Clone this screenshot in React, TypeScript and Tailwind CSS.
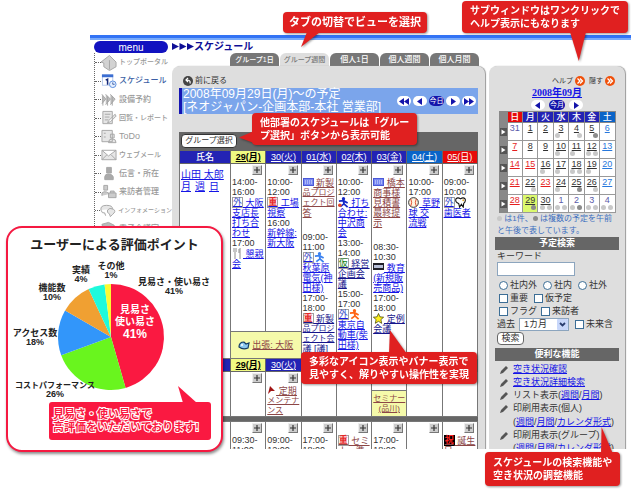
import type { ReactNode } from "react";
import { clsx } from "clsx";

type Tone = "new" | "read" | "navy";
type Entry = {
  time?: string[];
  icons?: string[];
  lines: string[];
  tone?: Tone;
  gap?: string;
};

const tones: Record<Tone, string> = {
  new: "text-[#1414e6]",
  read: "text-[#8c4646]",
  navy: "text-[#14148c]",
};

const week1: Entry[][] = [
  [
    { time: ["14:00-", "16:00"], icons: ["外"], lines: ["大阪", "支店長", "打ち合", "わせ"] },
    { time: ["17:00"], icons: ["fork"], lines: ["懇親", "会"] },
  ],
  [
    { time: ["10:00-", "12:00"], icons: ["重"], lines: ["工場", "視察"] },
    { time: ["16:00"], lines: ["新幹線:", "新大阪"] },
  ],
  [
    { icons: ["board"], lines: ["新製", "品プロジ", "ェクト回", "答"], tone: "read" },
    { time: ["09:00-", "11:00"], icons: ["外", "runblue"], lines: ["", "秋葉原", "電気(神", "田様)"], gap: "mt-3.5" },
    { time: ["17:00-", "18:00"], icons: ["重"], lines: ["新製", "品プロジ", "ェクト会", "議 [議]"], tone: "navy" },
  ],
  [
    { time: ["10:00-", "12:00"], icons: ["run"], lines: ["打ち", "合わせ:", "中沢商", "会"] },
    { time: ["13:00-", "14:00"], icons: ["仮"], lines: ["経営", "企画会", "議"], tone: "navy" },
    { time: ["15:00-", "17:00"], icons: ["外", "runorange"], lines: ["", "東京自", "動車(柴", "田様)"] },
  ],
  [
    { icons: ["board"], lines: ["橋本", "商事様", "見積書", "最終提", "示"], tone: "read" },
    { time: ["08:30-", "10:30"], icons: ["screen"], lines: ["教育", "(新規販", "売商品)"], gap: "mt-3.5" },
    { time: ["17:00-", "18:00"], icons: ["star"], lines: ["定例", "会議"], tone: "navy" },
  ],
  [{ time: ["10:00-", "17:00"], icons: ["ball"], lines: ["草野", "球 交", "流戦"] }],
  [{ time: ["09:00-", "10:00"], icons: ["外", "tooth"], lines: ["", "歯医者"] }],
];

const week3: Entry[][] = [
  [{ time: ["09:30-", "11:00"], lines: [] }],
  [{ time: ["09:00-", "12:00"], lines: [] }],
  [{ time: ["17:00-", "18:00"], lines: [] }],
  [{ icons: ["重"], lines: ["セミ", "ナー準"], tone: "read" }],
  [{ time: ["17:00-", "18:00"], lines: [] }],
  [],
  [{ icons: ["祝"], lines: ["誕生", "日"], tone: "read" }],
];

const days = ["29(月)", "30(火)", "01(水)", "02(木)", "03(金)", "04(土)", "05(日)"];

function Stamp({ name }: { name: string }) {
  if (name === "祝")
    return <span className="flex size-[11px] items-center justify-center bg-black text-[9px] leading-none font-bold text-[#ff2020]">祝</span>;
  if (name === "外" || name === "重" || name === "仮")
    return (
      <span
        className={clsx(
          "flex size-[11px] items-center justify-center border border-[#a0a0a0] bg-white text-[9px] leading-none",
          name === "外" && "text-[#3c50c8]",
          name === "重" && "font-bold text-[#e62828]",
          name === "仮" && "text-[#148214]"
        )}
      >
        {name}
      </span>
    );
  if (name === "board")
    return (
      <svg className="size-[11px]" viewBox="0 0 11 11">
        <rect x="0.5" y="1.5" width="10" height="7" fill="#7888f0" stroke="#4a58d8" />
        <path d="M2 4h7M2 6h7" stroke="#dfe4ff" strokeDasharray="1 1" />
      </svg>
    );
  if (name === "screen")
    return (
      <svg className="size-[11px]" viewBox="0 0 11 11">
        <rect y="1" width="11" height="7" fill="#202028" />
        <rect x="1" y="3" width="9" height="3" fill="#b8c0d8" />
      </svg>
    );
  if (name === "star")
    return (
      <svg className="size-[11px] overflow-visible" viewBox="0 0 12 12">
        <path d="M6 0.5 7.6 4.2 11.6 4.6 8.6 7.2 9.5 11.3 6 9.1 2.5 11.3 3.4 7.2 0.4 4.6 4.4 4.2Z" fill="#fff01e" stroke="#404000" strokeWidth="0.8" />
      </svg>
    );
  if (name === "ball")
    return (
      <svg className="size-[11px]" viewBox="0 0 12 12">
        <circle cx="6" cy="6" r="5.3" fill="#fff4e0" stroke="#222" />
        <path d="M3 2Q5 6 3 10M9 2Q7 6 9 10" fill="none" stroke="#e04020" />
      </svg>
    );
  if (name === "tooth")
    return (
      <svg className="size-[11px]" viewBox="0 0 12 12">
        <path d="M1 2Q3 0 6 2 9 0 11 2 12 5 9.5 7L9 11 7 8 5 11 4 7Q0 6 1 2Z" fill="#fff" stroke="#111" strokeWidth="1.2" />
        <circle cx="9" cy="3.5" r="1" fill="#e0a830" />
      </svg>
    );
  if (name === "fork")
    return (
      <svg className="size-[11px]" viewBox="0 0 11 11">
        <path d="M2 0v4M4 0v4M3 4v7M8 0v11M7 1v4" stroke="#8c8c8c" strokeWidth="1" fill="none" />
      </svg>
    );
  const body = name === "run" ? "#1428c8" : name === "runblue" ? "#3c82f0" : "#ff6414";
  return (
    <svg className="size-[11px]" viewBox="0 0 12 12">
      <circle cx="6" cy="1.8" r="1.8" fill={body} />
      <path d="M1 4.5 6 4 10.5 6.5M6 4 6.5 7.5 10.5 11M6.5 7.5 2.5 10.5" fill="none" stroke={body} strokeWidth="2" />
      {name === "run" && <circle cx="2" cy="9" r="2" fill="#e04628" />}
    </svg>
  );
}

function AddButton() {
  return (
    <button aria-label="予定を追加" className="mr-[3px] mb-0.5 ml-auto flex size-[10px] items-center justify-center border border-t-[#eee] border-r-[#777] border-b-[#777] border-l-[#eee] bg-[#ccc]">
      <svg className="size-[6px]" viewBox="0 0 6 6">
        <path d="M0 3h6M3 0v6" stroke="#333" strokeWidth="1.2" />
      </svg>
    </button>
  );
}

// four full-width characters only fit the column one size down
const isWide = (line: string) => line.length === 4 && !/[ -~]/.test(line);

function DayCell({ entries }: { entries: Entry[] }) {
  return (
    <>
      <AddButton />
      {entries.map((e, i) => (
        <div key={i} className={clsx("pl-px text-[9px] leading-[10px] whitespace-nowrap", e.gap)}>
          {e.time?.map((t) => (
            <div key={t} className="text-[#333]">{t}</div>
          ))}
          {e.lines.length > 0 && (
            <a href="#" className={clsx("block underline", tones[e.tone ?? "new"])}>
              {e.lines.map((line, n) =>
                n === 0 && e.icons ? (
                  <span key={n} className="flex h-[11px] items-center">
                    {e.icons.map((icon) => (
                      <Stamp key={icon} name={icon} />
                    ))}
                    <span className="whitespace-pre underline">{line && " " + line}</span>
                  </span>
                ) : (
                  <span key={n} className={clsx("block", isWide(line) && "text-[8px]")}>{line}</span>
                )
              )}
            </a>
          )}
        </div>
      ))}
    </>
  );
}

function HeadRow({ label, from }: { label: string; from: string }) {
  return (
    <tr className="h-[13px] bg-[#2323b4] text-[9px] leading-[11px] text-white">
      <th className="border border-[#666] p-0 font-medium">{label}</th>
      {days.map((d, i) => (
        <th
          key={from + d}
          className={clsx(
            "border border-[#666] p-0",
            i === 0 ? "bg-[#f0fa82] font-bold text-black" : "font-normal",
            i === 5 && "bg-[#0a64c8]",
            i === 6 && "bg-[#e60a0a]"
          )}
        >
          <a href="#" className="underline">{d}</a>
        </th>
      ))}
    </tr>
  );
}

const cell = "border border-[#777] bg-white p-0 pt-px align-top";

function WeekTable() {
  return (
    <table className="w-full table-fixed border-collapse">
      <colgroup>
        <col className="w-[51px]" />
        {days.map((d) => (
          <col key={d} />
        ))}
      </colgroup>
      <tbody>
        <HeadRow label="氏名" from="a" />
        <tr className="h-[168px]">
          <td rowSpan={2} className={clsx(cell, "text-[10px] leading-[12px] text-[#1414e6]")}>
            <div className="pt-1 pl-px">
              <a href="#" className="whitespace-pre underline">山田 太郎</a>
              <div className="flex gap-1">
                <a href="#" className="underline">月</a>
                <a href="#" className="underline">週</a>
                <a href="#" className="underline">日</a>
              </div>
            </div>
          </td>
          {week1.map((entries, i) => (
            <td key={i} rowSpan={i < 2 ? 1 : 2} className={cell}>
              {/* the busiest columns run on below the row */}
              <div className="h-[166px]">
                <DayCell entries={entries} />
              </div>
            </td>
          ))}
        </tr>
        <tr className="h-[27px]">
          <td colSpan={2} className="border border-[#777] bg-[#f5faaa] p-0">
            <a href="#" className="flex items-center justify-center gap-0.5 text-[9px] leading-[12px] text-[#8c4646] underline">
              <svg className="h-[9px] w-[12px]" viewBox="0 0 12 9">
                <path d="M1 6Q1 1 6 1L8 3 11 2 10 7Q5 9 1 6Z" fill="#8cc8f0" stroke="#143c64" strokeWidth="1.2" />
                <circle cx="4" cy="4" r="1" fill="#fff" />
              </svg>
              出張: 大阪
            </a>
          </td>
        </tr>
        <HeadRow label="グループ" from="b" />
        <tr className="h-[19px]">
          <td rowSpan={2} className={cell} />
          {days.map((d, i) => (
            <td key={d} rowSpan={i === 4 ? 1 : 2} className={cell}>
              <AddButton />
              {i === 1 && (
                <a href="#" className="block pl-px text-[8px] leading-[10px] whitespace-nowrap text-[#8c4646] underline">
                  <span className="flex h-[11px] items-center text-[9px]">
                    <svg className="size-[9px]" viewBox="0 0 9 9">
                      <path d="M1 8 3 0 8 5 4 5Z" fill="#a01414" />
                    </svg>
                    <span className="whitespace-pre underline"> 定期</span>
                  </span>
                  メンテナ
                  <br />
                  ンス
                </a>
              )}
            </td>
          ))}
        </tr>
        <tr className="h-[25px]">
          <td className="border border-[#777] bg-[#f5faaa] p-0 text-center text-[8px] leading-[10px]">
            <a href="#" className="text-[#8c4646] underline">
              セミナー
              <br />
              (品川)
            </a>
          </td>
        </tr>
        <tr className="h-[5px]">
          <td colSpan={8} className="bg-[#666] p-0" />
        </tr>
        <tr className="h-[40px]">
          <td className={cell} />
          {week3.map((entries, i) => (
            <td key={i} className={cell}>
              <DayCell entries={entries} />
            </td>
          ))}
        </tr>
      </tbody>
    </table>
  );
}

const menuItems = [
  { label: "トップポータル", size: "text-[7px]", icon: <path d="M0 7 9 0 16 7 16 12 9 16 3 12 3 8Z M9 5v10" fill="#d2d2d2" /> },
  { label: "スケジュール", size: "text-[8px]", icon: null },
  { label: "設備予約", size: "text-[8px]", icon: <path d="M1 2 5 7 1 12M5 2 10 7 5 13M10 2 15 7 10 13M2 4v10M7 4v10M12 4v10" fill="#bebebe" /> },
  { label: "回覧・レポート", size: "text-[7px]", icon: <path d="M2 1H12V14H2ZM4 4h6M4 7h5M4 10h4M15 4 8 11 7 13 10 12 16 6Z" /> },
  { label: "ToDo", size: "text-[9px]", icon: <path d="M1 1H12V13H1ZM3 4h2M3 8h2M10 5h4v4h-4ZM8 14Q8 10 12 10T16 14Z" /> },
  { label: "ウェブメール", size: "text-[7px]", icon: <path d="M1 3H16V13H1ZM1 3 8 9 16 3M1 13 6 8M16 13 11 8" /> },
  { label: "伝言・所在", size: "text-[8px]", icon: <path d="M6 1H11V7H6ZM4 14V11Q4 8 8 8T13 11V14Z" fill="#aaa" /> },
  { label: "来訪者管理", size: "text-[8px]", icon: <path d="M3 1H7V6H3ZM1 12V9Q3 7 6 8L9 10M8 9H16V14H8ZM10 9V7h4v2" fill="#ccc" /> },
  { label: "インフォメーション", size: "text-[6px]", icon: <path d="M1 7Q0 2 7 2T13 6M1 7Q2 11 5 10L6 13M8 7Q10 4 14 6T13 12L11 14 10 11Q7 10 8 7Z" /> },
  { label: "電子会議室", size: "text-[8px]", icon: <path d="M1 3 8 1 14 4V10H3Z" fill="#bbb" /> },
];

function SideMenu() {
  return (
    <nav className="w-[82px] shrink-0 pt-px">
      <div className="ml-1 flex h-[12px] w-[74px] items-center justify-center rounded-full bg-[#1212c0] font-['Liberation_Sans',sans-serif] text-[10px] text-white">menu</div>
      <ul className="ml-1 border-l border-dotted border-[#666]">
        {menuItems.map((item, i) => (
          <li key={item.label} className={clsx("flex items-center", i % 2 === 0 ? "h-[19px]" : "h-[18px]")}>
            <span className="w-[6px] border-t border-dotted border-[#666]" />
            <a href="#" className={clsx("flex items-center gap-0.5 font-medium whitespace-nowrap", i === 1 ? "text-[#3c5fa5]" : "text-[#999]", item.size)}>
              <svg className="size-4" viewBox="0 0 17 16" fill="#e6e6e6" stroke="#a5a5a5">
                {item.icon ?? (
                  <>
                    <rect x="1.5" y="1.5" width="11" height="11" fill="#fff" stroke="#b4c8eb" />
                    <rect x="1" y="1" width="12" height="3" fill="#3c6ed2" stroke="none" />
                    <path d="M5 7 7 6V12" fill="none" stroke="#142878" strokeWidth="1.6" />
                    <circle cx="12.5" cy="11.5" r="3.5" fill="#e6f0ff" stroke="#5a8cdc" />
                    <path d="M12.5 9.5v2h2" fill="none" stroke="#3c5fa5" />
                  </>
                )}
              </svg>
              {item.label}
            </a>
          </li>
        ))}
      </ul>
    </nav>
  );
}

function Arrow({ d, label }: { d: string; label: string }) {
  return (
    <button aria-label={label} className="flex h-[10px] w-[14px] items-center justify-center rounded-full bg-white">
      <svg className="h-[7px] w-[12px]" viewBox="0 0 12 7" fill="#1414aa">
        <path d={d} />
      </svg>
    </button>
  );
}

const LEFT = "M8 0V7L3 3.5Z";
const RIGHT = "M4 0V7L9 3.5Z";

const tabs = [
  { label: "グループ1日", size: "text-[7px]" },
  { label: "グループ週間", size: "text-[7px]" },
  { label: "個人1日", size: "text-[8px]" },
  { label: "個人週間", size: "text-[8px]" },
  { label: "個人月間", size: "text-[8px]" },
];

// [day, colour, left dot, right dot]; 1 = light, 2 = dark
type CalDay = [number, string, number, number];
const K = "text-[#333]";
const R = "text-[#e61e1e]";
const B = "text-[#2878dc]";
const P = "text-[#5a5aaa]";
const calendar: CalDay[][] = [
  [[31, P, 0, 0], [1, K, 0, 0], [2, K, 0, 0], [3, K, 1, 0], [4, K, 0, 1], [5, K, 0, 2], [6, B, 0, 0]],
  [[7, R, 0, 0], [8, K, 0, 0], [9, K, 0, 0], [10, K, 1, 0], [11, K, 1, 0], [12, K, 1, 1], [13, B, 0, 0]],
  [[14, R, 0, 0], [15, R, 0, 0], [16, K, 1, 0], [17, K, 1, 0], [18, K, 1, 1], [19, K, 1, 0], [20, B, 0, 0]],
  [[21, R, 0, 0], [22, K, 0, 1], [23, R, 0, 0], [24, K, 1, 0], [25, K, 0, 2], [26, K, 0, 1], [27, B, 0, 0]],
  [[28, R, 0, 0], [29, K, 0, 2], [30, K, 1, 1], [1, P, 1, 1], [2, P, 1, 2], [3, P, 1, 1], [4, P, 1, 1]],
];

function Dot({ kind }: { kind: number }) {
  return <span className={clsx("inline-block size-[5px] rounded-full", kind === 1 && "bg-[#c8c8c8]", kind === 2 && "bg-[#8c8c8c]")} />;
}

function MiniCalendar() {
  return (
    <table className="mx-auto w-[117px] table-fixed border-collapse text-[9px] leading-[10px]">
      <colgroup>
        <col className="w-[8px]" />
      </colgroup>
      <thead>
        <tr className="h-[11px] bg-[#2323b4] text-white">
          <th className="border border-[#888] bg-[#888] p-0" />
          {["日", "月", "火", "水", "木", "金", "土"].map((d, i) => (
            <th key={d} className={clsx("border border-[#888] p-0 font-medium", i === 0 && "bg-[#e60a0a]", i === 6 && "bg-[#0a64c8]")}>
              {d}
            </th>
          ))}
        </tr>
      </thead>
      <tbody>
        {calendar.map((row, r) => (
          <tr key={r} className="h-[18px] bg-white">
            <td className="border border-[#888] bg-[#888] p-0">
              <svg className="h-[8px] w-[7px]" viewBox="0 0 7 8">
                <rect width="7" height="8" fill="#555" />
                <path d="M1.5 1.5 5.5 4 1.5 6.5Z" fill="#fff" />
              </svg>
            </td>
            {row.map(([day, color, a, b], i) => {
              const outside = (r === 0 && i === 0) || (r === 4 && i > 2);
              return (
                <td key={i} className={clsx("border border-[#999] p-0 text-center align-top", r === 4 && i === 1 && "bg-[#dcfa6e]")}>
                  <a href="#" className={clsx("block", color, !outside && "underline")}>{day}</a>
                  <span className="flex justify-center gap-0.5">
                    <Dot kind={a} />
                    <Dot kind={b} />
                  </span>
                </td>
              );
            })}
          </tr>
        ))}
      </tbody>
    </table>
  );
}

function Bar({ children }: { children: ReactNode }) {
  return <h3 className="flex h-[13px] items-center justify-center bg-[#666] text-[9px] leading-none font-bold text-white">{children}</h3>;
}

function Check({ type = "checkbox", label }: { type?: "checkbox" | "radio"; label: string }) {
  return (
    <label className="flex items-center gap-0.5">
      <input
        type={type}
        name={type === "radio" ? "scope" : undefined}
        className={clsx("size-[9px] appearance-none border border-[#3c6e96] bg-white", type === "radio" && "rounded-full")}
      />
      {label}
    </label>
  );
}

function Tool({ children }: { children: ReactNode }) {
  return (
    <li className="flex h-[13px] items-center gap-1">
      <svg className="size-[10px]" viewBox="0 0 10 10">
        <path d="M1 9 2 6 7 1 9 3 4 8Z" fill="#555" />
      </svg>
      <span>{children}</span>
    </li>
  );
}

function Link({ children }: { children: ReactNode }) {
  return <a href="#" className="text-[#1414e6] underline">{children}</a>;
}

function HelpIcon() {
  return (
    <svg className="size-[10px]" viewBox="0 0 10 10">
      <circle cx="5" cy="5" r="5" fill="#f0500a" />
      <path d="M2.5 2.5 5 5 2.5 7.5M5 2.5 7.5 5 5 7.5" fill="none" stroke="#fff" strokeWidth="1.3" />
    </svg>
  );
}

function SubWindow() {
  return (
    <aside className="w-[136px] shrink-0 rounded-t-lg bg-[#dedede] px-1.5 pt-2 text-[9px] leading-[13px] whitespace-nowrap text-[#333] shadow-[1px_0_1px_#999]">
      <div className="flex h-[13px] items-center justify-end gap-1 pr-1 text-[7px]">
        <a href="#" className="flex items-center gap-0.5">ヘルプ <HelpIcon /></a>
        <a href="#" className="flex items-center gap-0.5">隠す <HelpIcon /></a>
      </div>
      <a href="#" className="block text-center font-['Liberation_Serif','Noto_Sans_CJK_JP',serif] text-[10px] leading-[12px] font-bold text-[#1414e6] underline">2008年09月</a>
      <div className="flex h-[12px] items-center justify-center gap-1">
        <Arrow d={LEFT} label="前月" />
        <button className="h-[10px] rounded-full bg-[#1414aa] px-px text-[7px] leading-[10px] text-white">今月</button>
        <Arrow d={RIGHT} label="翌月" />
      </div>
      <MiniCalendar />
      <p className="pl-0.5 text-[8px] leading-[12px] text-[#3c6ebe]">
        <Dot kind={1} /> は1件、<Dot kind={2} /> は複数の予定を午前
        <br />
        と午後で表しています。
      </p>
      <Bar>予定検索</Bar>
      <form className="px-0.5">
        <label htmlFor="keyword" className="block h-[12px] leading-[12px]">キーワード</label>
        <input id="keyword" className="block h-[14px] w-[78px] border border-[#8ca5be] bg-white px-0.5" />
        <div className="flex gap-1.5 pt-0.5 pl-0.5 leading-[14px]">
          <Check type="radio" label="社内外" />
          <Check type="radio" label="社内" />
          <Check type="radio" label="社外" />
        </div>
        <div className="flex gap-1.5 pl-0.5">
          <Check label="重要" />
          <Check label="仮予定" />
        </div>
        <div className="flex gap-1 pl-0.5">
          <Check label="フラグ" />
          <Check label="来訪者" />
        </div>
        <div className="flex items-center">
          <label htmlFor="past">過去</label>
          <span className="relative mr-1.5 ml-1">
            <select id="past" className="block h-[13px] w-[50px] appearance-none border border-[#8ca5be] bg-white pl-1 text-[9px] leading-[11px]">
              <option>1カ月</option>
            </select>
            <svg className="pointer-events-none absolute top-px right-px size-[11px]" viewBox="0 0 11 11">
              <rect width="11" height="11" rx="1" fill="#c8d7fa" />
              <path d="M3 4 5.5 6.5 8 4" fill="none" stroke="#283c6e" strokeWidth="1.8" />
            </svg>
          </span>
          <Check label="未来含" />
        </div>
        <button type="button" className="my-px block h-[13px] w-[27px] rounded-sm border border-[#666] bg-white text-[9px] leading-[11px]">検索</button>
      </form>
      <div className="pt-0.5">
        <Bar>便利な機能</Bar>
      </div>
      <ul className="pt-0.5 pl-1">
        <Tool><Link>空き状況確認</Link></Tool>
        <Tool><Link>空き状況詳細検索</Link></Tool>
        <Tool>リスト表示(<Link>週間</Link>/<Link>月間</Link>)</Tool>
        <Tool>印刷用表示(個人)</Tool>
        <li className="h-[14px] pl-3.5 leading-[14px]">(<Link>週間</Link>/<Link>月間</Link>/<Link>カレンダ形式</Link>)</li>
        <Tool>印刷用表示(グループ)</Tool>
        <li className="h-[14px] pl-3.5">(<Link>週間</Link>/<Link>月間</Link>/<Link>カレンダ形式</Link>)</li>
      </ul>
    </aside>
  );
}

function Callout({ className, tail, points, children }: { className: string; tail: string; points: string; children: ReactNode }) {
  return (
    <div className={clsx("absolute rounded-[4px] bg-[#e02020] leading-[13px] font-bold whitespace-nowrap text-white drop-shadow-[1px_1px_1px_rgba(0,0,0,0.4)]", className)}>
      <svg className={clsx("absolute", tail)} viewBox="0 0 20 30" preserveAspectRatio="none">
        <polygon points={points} fill="#e02020" />
      </svg>
      <span className="relative">{children}</span>
    </div>
  );
}

const slices = [
  { from: 0, to: 164, color: "#fa1941" },
  { from: 164, to: 250, color: "#69f51e" },
  { from: 250, to: 300, color: "#3296fa" },
  { from: 300, to: 335, color: "#f0a032" },
  { from: 335, to: 353, color: "#1efadc" },
  { from: 353, to: 360, color: "#fafa32" },
];

function slicePath(from: number, to: number) {
  const at = (deg: number) => {
    const rad = (deg * Math.PI) / 180;
    return `${103 + 53 * Math.sin(rad)} ${83 - 53 * Math.cos(rad)}`;
  };
  return `M103 83L${at(from)}A53 53 0 0 1 ${at(to)}Z`;
}

const pieLabels = [
  { x: 73, y: 19, name: "実績", value: "4%" },
  { x: 103, y: 15, name: "その他", value: "1%" },
  { x: 166, y: 31, name: "見易さ・使い易さ", value: "41%" },
  { x: 44, y: 37, name: "機能数", value: "10%" },
  { x: 27, y: 82, name: "アクセス数", value: "18%" },
  { x: 47, y: 134, name: "コストパフォーマンス", value: "26%" },
];

function RatingCard() {
  return (
    <section className="absolute top-[226px] left-[6px] w-[217px] rounded-2xl border-2 border-[#f51941] bg-white pb-[10px] shadow-[1px_2px_3px_rgba(0,0,0,0.45)]">
      <h2 className="pt-2 text-center text-[13px] leading-[18px] font-bold text-[#222]">ユーザーによる評価ポイント</h2>
      <svg className="block h-[148px] w-full" viewBox="0 0 213 148">
        {slices.map((s) => (
          <path key={s.color} d={slicePath(s.from, s.to)} fill={s.color} />
        ))}
        <g textAnchor="middle" fontWeight="bold" fill="#222">
          {pieLabels.map((l) => (
            <g key={l.name}>
              <text x={l.x} y={l.y} fontSize={l.name.length > 8 ? 8 : 9}>{l.name}</text>
              <text x={l.x} y={l.y + 9} fontSize="9">{l.value}</text>
            </g>
          ))}
          <g fill="#fff" fontSize="10">
            <text x="127" y="59">見易さ</text>
            <text x="127" y="71">使い易さ</text>
            <text x="127" y="84" fontSize="12">41%</text>
          </g>
        </g>
      </svg>
      <div className="relative mr-[10px] ml-[41px] rounded-[3px] bg-[#fa1941] py-1.5 pl-1 text-[11px] leading-[13px] font-bold whitespace-nowrap text-[#fa1941] [-webkit-text-stroke:2px_white] [paint-order:stroke]">
        <svg className="absolute -top-4 left-[128px] h-[17px] w-[20px]" viewBox="0 0 20 17">
          <polygon points="1,0 6,17 20,17" fill="#fa1941" />
        </svg>
        見易さ・使い易さで
        <br />
        高評価をいただいております!
      </div>
    </section>
  );
}

export default function App() {
  return (
    <div className="relative min-h-[489px] overflow-hidden bg-white pt-[35px] font-['Liberation_Sans','Noto_Sans_CJK_JP',sans-serif]">
      <main className="ml-[90px] max-h-[414px] overflow-hidden">
        <div className="h-[5px] border-b-2 border-[#78aafa] bg-[#3273f5]" />
        <div className="flex">
          <SideMenu />
          <div className="min-w-0 flex-1 pr-1.5">
            <h1 className="flex h-[13px] items-center text-[10px] leading-none font-bold text-[#0f0f96]">
              <svg className="h-[7px] w-[22px]" viewBox="0 0 22 7" fill="#0f0f96">
                <path d="M0 0 7 3.5 0 7ZM7.5 0 14.5 3.5 7.5 7ZM15 0 22 3.5 15 7Z" />
              </svg>
              スケジュール
            </h1>
            <div className="flex gap-px pl-[58px]">
              {tabs.map((tab, i) => (
                <a
                  key={tab.label}
                  href="#"
                  className={clsx(
                    "flex h-[13px] w-[49px] items-center justify-center rounded-t-md leading-none font-medium whitespace-nowrap",
                    i === 1 ? "bg-[#dedede] text-[#777]" : "bg-[#777] text-white",
                    tab.size
                  )}
                >
                  {tab.label}
                </a>
              ))}
            </div>
            <div className="flex gap-1">
              <section className="min-w-0 flex-1 rounded-t-lg bg-[#dedede] px-[7px] pt-[7px] shadow-[1px_0_1px_#999]">
                <a href="#" className="flex h-[15px] items-center gap-0.5 pl-1 text-[8px] text-[#333]">
                  <svg className="size-[10px]" viewBox="0 0 10 10">
                    <circle cx="5" cy="5" r="5" fill="#444" />
                    <path d="M7 7.5Q8 4 3.5 4M5 2 3 4 5 6" fill="none" stroke="#fff" strokeWidth="1.2" />
                  </svg>
                  前に戻る
                </a>
                <div className="flex items-center justify-between border-l-[3px] border-[#1414b4] bg-[#7ba5eb] pr-0.5">
                  <h2 className="pl-px text-[12px] leading-[13px] whitespace-nowrap text-white">
                    2008年09月29日(月)～の予定
                    <br />
                    [ネオジャパン-企画本部-本社 営業部]
                  </h2>
                  <div className="flex shrink-0 items-center gap-0.5">
                    <Arrow d="M6 0V7L1 3.5ZM11 0V7L6 3.5Z" label="前週" />
                    <Arrow d={LEFT} label="前日" />
                    <button className="h-[10px] w-[15px] rounded-full bg-[#1414aa] text-[7px] leading-[10px] text-white">今日</button>
                    <Arrow d={RIGHT} label="翌日" />
                    <Arrow d="M1 0V7L6 3.5ZM6 0V7L11 3.5Z" label="翌週" />
                  </div>
                </div>
                <div className="mt-[18px] flex h-[18px] items-center bg-[#666] pl-0.5">
                  <button className="h-[14px] w-[56px] rounded-sm border border-[#333] bg-white text-[8px] leading-[12px] whitespace-nowrap text-[#333]">グループ選択</button>
                </div>
                <WeekTable />
              </section>
              <SubWindow />
            </div>
          </div>
        </div>
      </main>

      <Callout className="top-[12px] left-[283px] px-1.5 py-1 text-[11px]" tail="top-[20px] left-[17px] h-[15px] w-[20px]" points="1,30 7,0 20,0">
        タブの切替でビューを選択
      </Callout>
      <Callout className="top-[1px] left-[462px] px-2 py-[3px] text-[10px]" tail="top-[31px] left-[108px] h-[29px] w-[16px]" points="0,0 20,0 11,30">
        サブウィンドウはワンクリックで
        <br />
        ヘルプ表示にもなります
      </Callout>
      <Callout className="top-[113px] left-[252px] px-2 py-[3px] text-[10px]" tail="top-[18px] -left-[13px] h-[12px] w-[15px]" points="20,0 20,30 0,16">
        他部署のスケジュールは「グルー
        <br />
        プ選択」ボタンから表示可能
      </Callout>
      <Callout className="top-[352px] left-[301px] px-2 py-[3px] text-[10px]" tail="-top-[22px] left-[88px] h-[24px] w-[18px]" points="1,0 0,30 20,30">
        多彩なアイコン表示やバナー表示で
        <br />
        見やすく、解りやすい操作性を実現
      </Callout>
      <Callout className="top-[452px] left-[485px] px-2 py-1 text-[10px]" tail="-top-[25px] left-[116px] h-[27px] w-[12px]" points="1,0 0,30 20,30">
        スケジュールの検索機能や
        <br />
        空き状況の調整機能
      </Callout>
      <RatingCard />
    </div>
  );
}
